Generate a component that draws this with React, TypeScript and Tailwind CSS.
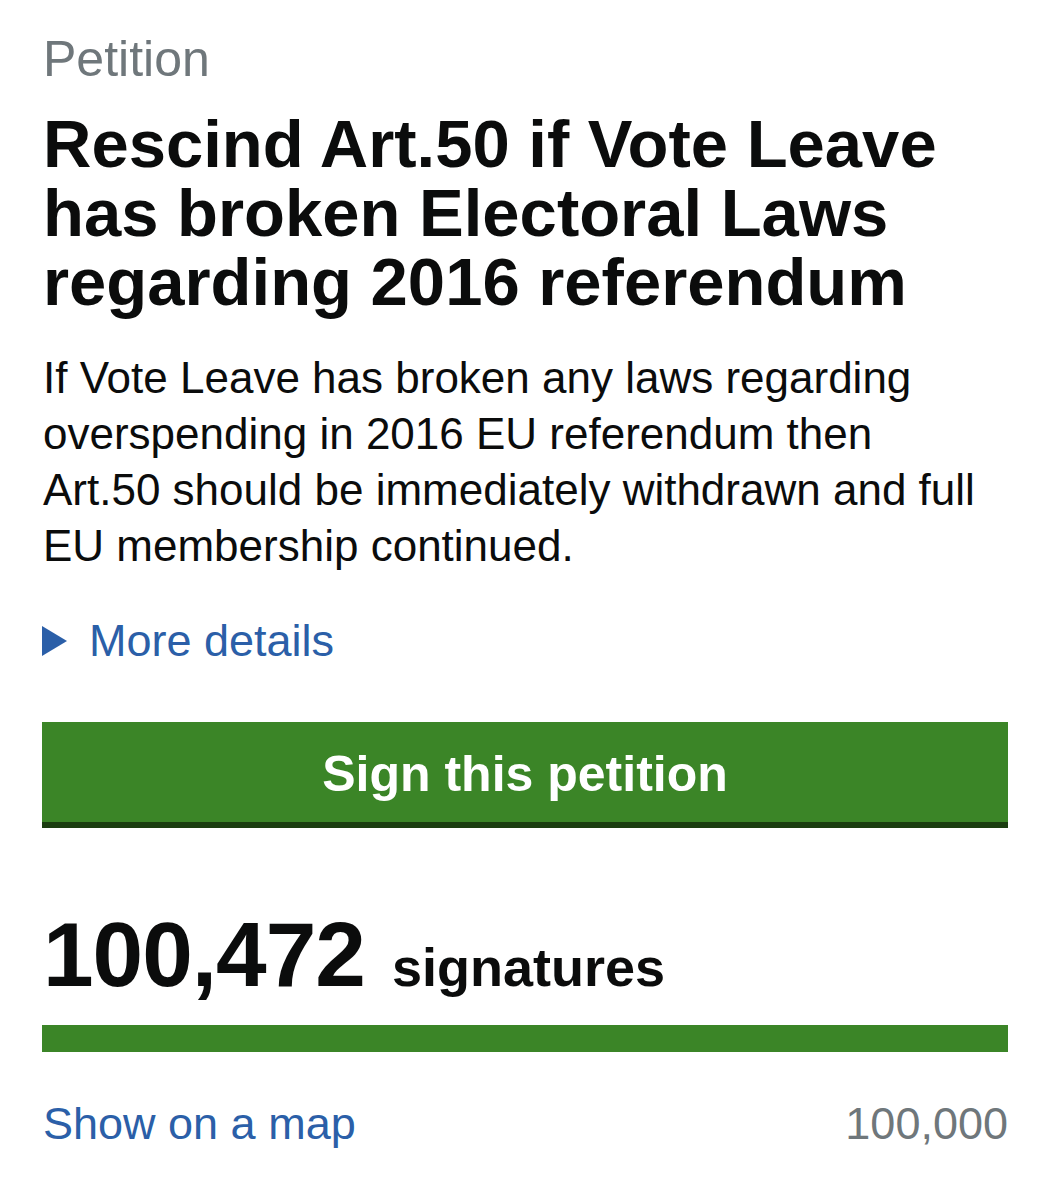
import React from "react";

export default function App() {
  return (
    <div
      className="w-[1051px] h-[1200px] bg-white pl-[43px] pr-[43px] pt-[31px]"
      style={{ fontFamily: '"Liberation Sans", Arial, sans-serif' }}
    >
      <div className="text-[50px] leading-[56px] text-[#6f777b]">Petition</div>
      <h1 className="mt-[22px] text-[67px] leading-[69px] font-bold text-[#0b0c0c]">
        Rescind Art.50 if Vote Leave has broken Electoral Laws regarding 2016 referendum
      </h1>
      <p className="mt-[34px] pr-[14px] text-[44px] leading-[56px] text-[#0b0c0c]">
        If Vote Leave has broken any laws regarding overspending in 2016 EU referendum then
        Art.50 should be immediately withdrawn and full EU membership continued.
      </p>
      <div className="mt-[39px] flex items-center gap-[22px] text-[45px] leading-[56px] text-[#2b5fa8]">
        <svg width="25" height="30" viewBox="0 0 25 30" className="ml-[-1px]">
          <polygon points="0,0 25,15 0,30" fill="#2b5fa8" />
        </svg>
        <span>More details</span>
      </div>
      <div className="mt-[53px] h-[106px] pt-[4px] bg-[#3b8527] border-b-[6px] border-[#1b3d10] flex items-center justify-center ml-[-1px]">
        <span className="text-[50px] font-bold text-white leading-none">Sign this petition</span>
      </div>
      <div className="mt-[77px] h-[100px] flex items-baseline gap-[27px] text-[#0b0c0c] font-bold">
        <span className="text-[91px] leading-[100px] tracking-[-1px]">100,472</span>
        <span className="text-[54px] leading-[60px]">signatures</span>
      </div>
      <div className="mt-[20px] h-[27px] bg-[#3b8527] ml-[-1px]" />
      <div className="mt-[44px] flex items-center justify-between text-[45px] leading-[56px]">
        <span className="text-[#2b5fa8]">Show on a map</span>
        <span className="text-[#6f777b]">100,000</span>
      </div>
    </div>
  );
}
